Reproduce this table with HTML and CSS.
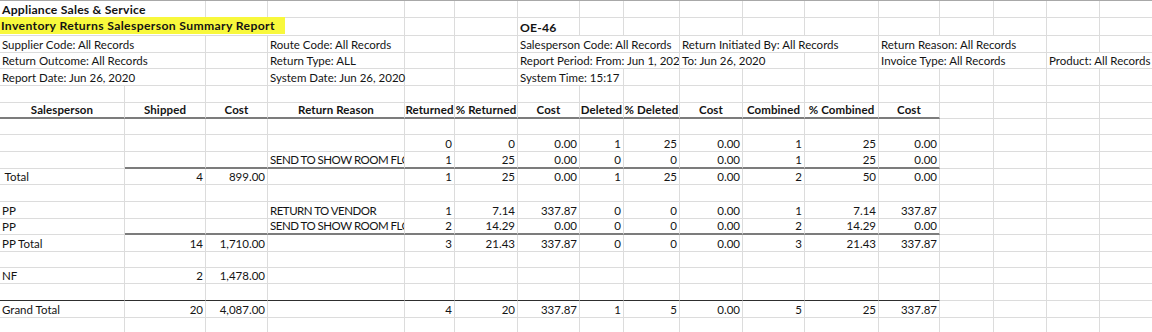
FILE: index.html
```html
<!DOCTYPE html>
<html lang="en">
<head>
<meta charset="utf-8">
<title>Inventory Returns Salesperson Summary Report</title>
<link rel="stylesheet" href="styles.css">
</head>
<body>
<div class="sheet">
  <!-- row 1 -->
  <div class="b s2">Appliance Sales &amp; Service</div><div></div><div></div><div></div><div></div><div></div><div></div><div></div><div></div><div></div><div></div><div></div><div></div><div></div><div></div><div></div>
  <!-- row 2 -->
  <div class="s4 hl"><span>Inventory Returns Salesperson Summary Report</span></div><div></div><div></div><div class="b">OE-46</div><div></div><div></div><div></div><div></div><div></div><div></div><div></div><div></div><div></div><div></div>
  <!-- row 3 -->
  <div class="s2">Supplier Code: All Records</div><div></div><div>Route Code: All Records</div><div></div><div></div><div class="s3">Salesperson Code: All Records</div><div class="s3">Return Initiated By: All Records</div><div class="s3">Return Reason: All Records</div><div></div><div></div>
  <!-- row 4 -->
  <div class="s2">Return Outcome: All Records</div><div></div><div>Return Type: ALL</div><div></div><div></div><div class="s3 clip">Report Period: From: Jun 1, 2020</div><div class="s2">To: Jun 26, 2020</div><div></div><div class="s3">Invoice Type: All Records</div><div class="s2">Product: All Records</div>
  <!-- row 5 -->
  <div class="s2">Report Date: Jun 26, 2020</div><div></div><div>System Date: Jun 26, 2020</div><div></div><div></div><div class="s2">System Time: 15:17</div><div></div><div></div><div></div><div></div><div></div><div></div><div></div><div></div><div></div>
  <!-- row 6 -->
  <div></div><div></div><div></div><div></div><div></div><div></div><div></div><div></div><div></div><div></div><div></div><div></div><div></div><div></div><div></div><div></div><div></div>
  <!-- row 7 header -->
  <div class="h tk">Salesperson</div><div class="h tk">Shipped</div><div class="h tk">Cost</div><div class="h tk">Return Reason</div><div class="h tk">Returned</div><div class="h tk">% Returned</div><div class="h tk">Cost</div><div class="h tk">Deleted</div><div class="h tk">% Deleted</div><div class="h tk">Cost</div><div class="h tk">Combined</div><div class="h tk">% Combined</div><div class="h tk">Cost</div><div></div><div></div><div></div><div></div>
  <!-- row 8 -->
  <div></div><div></div><div></div><div></div><div></div><div></div><div></div><div></div><div></div><div></div><div></div><div></div><div></div><div></div><div></div><div></div><div></div>
  <!-- row 9 -->
  <div></div><div></div><div></div><div></div><div class="n">0</div><div class="n">0</div><div class="n">0.00</div><div class="n">1</div><div class="n">25</div><div class="n">0.00</div><div class="n">1</div><div class="n">25</div><div class="n">0.00</div><div></div><div></div><div></div><div></div>
  <!-- row 10 -->
  <div></div><div class="tk"></div><div class="tk"></div><div class="tk clip uc">SEND TO SHOW ROOM FLOOR</div><div class="n tk">1</div><div class="n tk">25</div><div class="n tk">0.00</div><div class="n tk">0</div><div class="n tk">0</div><div class="n tk">0.00</div><div class="n tk">1</div><div class="n tk">25</div><div class="n tk">0.00</div><div></div><div></div><div></div><div></div>
  <!-- row 11 -->
  <div>&nbsp;Total</div><div class="n">4</div><div class="n">899.00</div><div></div><div class="n">1</div><div class="n">25</div><div class="n">0.00</div><div class="n">1</div><div class="n">25</div><div class="n">0.00</div><div class="n">2</div><div class="n">50</div><div class="n">0.00</div><div></div><div></div><div></div><div></div>
  <!-- row 12 -->
  <div></div><div></div><div></div><div></div><div></div><div></div><div></div><div></div><div></div><div></div><div></div><div></div><div></div><div></div><div></div><div></div><div></div>
  <!-- row 13 -->
  <div>PP</div><div></div><div></div><div class="clip uc">RETURN TO VENDOR</div><div class="n">1</div><div class="n">7.14</div><div class="n">337.87</div><div class="n">0</div><div class="n">0</div><div class="n">0.00</div><div class="n">1</div><div class="n">7.14</div><div class="n">337.87</div><div></div><div></div><div></div><div></div>
  <!-- row 14 -->
  <div>PP</div><div class="tk"></div><div class="tk"></div><div class="tk clip uc">SEND TO SHOW ROOM FLOOR</div><div class="n tk">2</div><div class="n tk">14.29</div><div class="n tk">0.00</div><div class="n tk">0</div><div class="n tk">0</div><div class="n tk">0.00</div><div class="n tk">2</div><div class="n tk">14.29</div><div class="n tk">0.00</div><div></div><div></div><div></div><div></div>
  <!-- row 15 -->
  <div>PP Total</div><div class="n">14</div><div class="n">1,710.00</div><div></div><div class="n">3</div><div class="n">21.43</div><div class="n">337.87</div><div class="n">0</div><div class="n">0</div><div class="n">0.00</div><div class="n">3</div><div class="n">21.43</div><div class="n">337.87</div><div></div><div></div><div></div><div></div>
  <!-- row 16 -->
  <div></div><div></div><div></div><div></div><div></div><div></div><div></div><div></div><div></div><div></div><div></div><div></div><div></div><div></div><div></div><div></div><div></div>
  <!-- row 17 -->
  <div>NF</div><div class="n">2</div><div class="n">1,478.00</div><div></div><div></div><div></div><div></div><div></div><div></div><div></div><div></div><div></div><div></div><div></div><div></div><div></div><div></div>
  <!-- row 18 -->
  <div class="dk"></div><div class="dk"></div><div class="dk"></div><div class="dk"></div><div class="dk"></div><div class="dk"></div><div class="dk"></div><div class="dk"></div><div class="dk"></div><div class="dk"></div><div class="dk"></div><div class="dk"></div><div class="dk"></div><div></div><div></div><div></div><div></div>
  <!-- row 19 -->
  <div>Grand Total</div><div class="n">20</div><div class="n">4,087.00</div><div></div><div class="n">4</div><div class="n">20</div><div class="n">337.87</div><div class="n">1</div><div class="n">5</div><div class="n">0.00</div><div class="n">5</div><div class="n">25</div><div class="n">337.87</div><div></div><div></div><div></div><div></div>
  <!-- row 20 -->
  <div></div><div></div><div></div><div></div><div></div><div></div><div></div><div></div><div></div><div></div><div></div><div></div><div></div><div></div><div></div><div></div><div></div>
</div>
</body>
</html>
```

FILE: styles.css
```css
html, body {
  margin: 0;
  padding: 0;
  background: #ffffff;
}

body {
  font-family: Lato, "Liberation Sans", sans-serif;
  font-size: 11.5px;
  color: #141414;
}

.sheet {
  display: grid;
  grid-template-columns: 125px 81px 62px 137px 50px 63px 62px 44px 56px 63px 62px 74px 61px 54px 53px 53px 53px;
  grid-template-rows: 17px 18px 17px 16px 17px 17px 16px 16px 17px 17px 16px 17px 17px 16px 17px 16px 16px 17px 17px 17px;
  border-top: 1px solid #a8a8a8;
  width: 1153px;
}

.sheet > div {
  box-sizing: border-box;
  border-right: 1px solid #dcdcdc;
  border-bottom: 1px solid #dcdcdc;
  white-space: nowrap;
  padding: 0 2px 1px 2px;
  display: flex;
  align-items: flex-end;
  line-height: 13px;
  min-width: 0;
}

.sheet > .s2 { grid-column: span 2; }
.sheet > .s3 { grid-column: span 3; }
.sheet > .s4 { grid-column: span 4; }

.sheet > .b {
  font-weight: 700;
  font-size: 12.2px;
  letter-spacing: 0.2px;
}

.sheet > .clip { overflow: hidden; }

.sheet > .uc { letter-spacing: -0.5px; }

.sheet > .n { justify-content: flex-end; }

.sheet > .h {
  justify-content: center;
  font-weight: 700;
  letter-spacing: 0.1px;
}

.sheet > .tk { border-bottom: 2px solid #7c7c7c; }

.sheet > .dk { border-bottom: 1px solid #2e2e2e; }

.sheet > .hl {
  align-items: flex-start;
  padding: 0;
}

.hl span {
  display: block;
  width: 285px;
  height: 17px;
  margin-top: -1px;
  padding-left: 1px;
  box-sizing: border-box;
  background: #f8f83c;
  font-weight: 700;
  font-size: 12.2px;
  letter-spacing: 0.35px;
  line-height: 17px;
}
```
